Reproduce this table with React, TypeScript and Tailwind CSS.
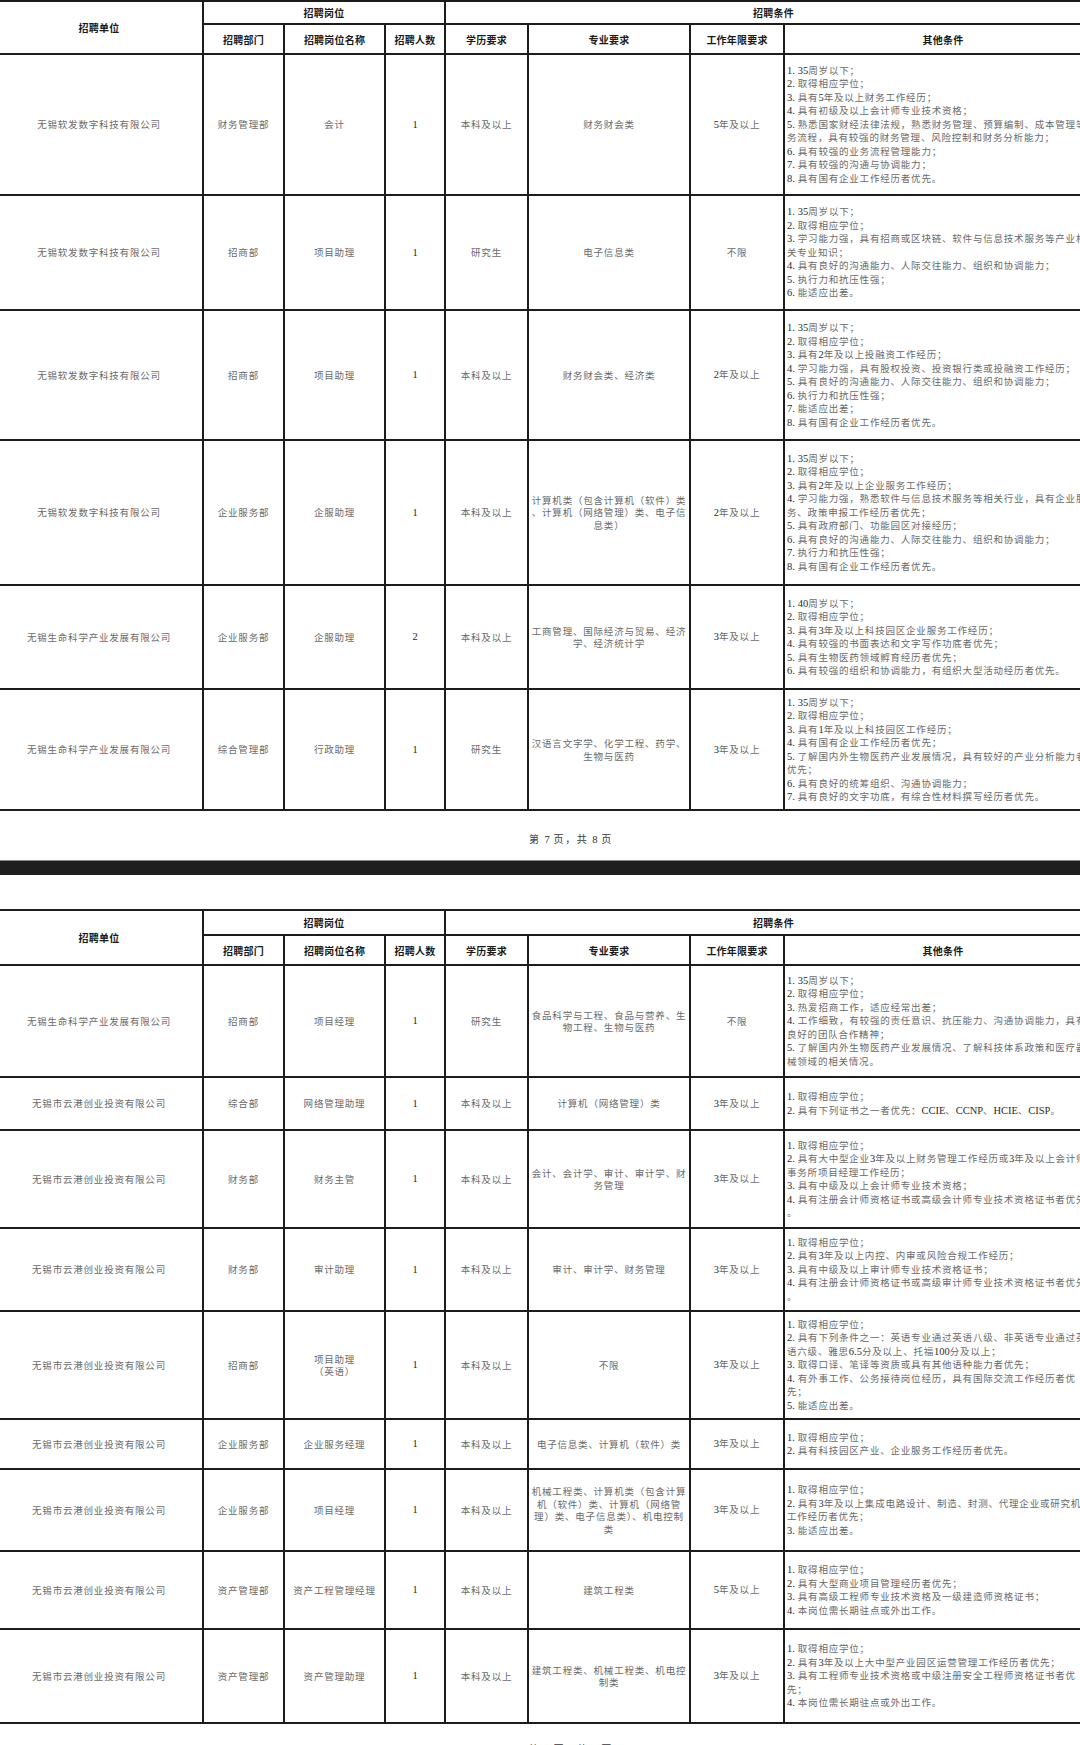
import React from "react";

type Row = {
  h: string;
  unit: string;
  dept: string;
  pos: string[];
  n: string;
  edu: string;
  major: string[];
  years: string;
  other: string[];
};

// column widths of the scanned table (first column starts just off screen)
const grid = "grid grid-cols-[208px_81px_101px_60px_83px_162px_94px_318px]";
const line = "border-r-2 border-b-2 border-[#1c1c1c]";

const SUB = ["招聘部门", "招聘岗位名称", "招聘人数", "学历要求", "专业要求", "工作年限要求", "其他条件"];

const YG = "无锡市云港创业投资有限公司";
const RF = "无锡软发数字科技有限公司";
const SM = "无锡生命科学产业发展有限公司";

const page7: Row[] = [
  {
    h: "h-[141px]",
    unit: RF,
    dept: "财务管理部",
    pos: ["会计"],
    n: "1",
    edu: "本科及以上",
    major: ["财务财会类"],
    years: "5年及以上",
    other: [
      "1. 35周岁以下；",
      "2. 取得相应学位；",
      "3. 具有5年及以上财务工作经历；",
      "4. 具有初级及以上会计师专业技术资格；",
      "5. 熟悉国家财经法律法规，熟悉财务管理、预算编制、成本管理等业",
      "务流程，具有较强的财务管理、风险控制和财务分析能力；",
      "6. 具有较强的业务流程管理能力；",
      "7. 具有较强的沟通与协调能力；",
      "8. 具有国有企业工作经历者优先。",
    ],
  },
  {
    h: "h-[115px]",
    unit: RF,
    dept: "招商部",
    pos: ["项目助理"],
    n: "1",
    edu: "研究生",
    major: ["电子信息类"],
    years: "不限",
    other: [
      "1. 35周岁以下；",
      "2. 取得相应学位；",
      "3. 学习能力强，具有招商或区块链、软件与信息技术服务等产业相",
      "关专业知识；",
      "4. 具有良好的沟通能力、人际交往能力、组织和协调能力；",
      "5. 执行力和抗压性强；",
      "6. 能适应出差。",
    ],
  },
  {
    h: "h-[130px]",
    unit: RF,
    dept: "招商部",
    pos: ["项目助理"],
    n: "1",
    edu: "本科及以上",
    major: ["财务财会类、经济类"],
    years: "2年及以上",
    other: [
      "1. 35周岁以下；",
      "2. 取得相应学位；",
      "3. 具有2年及以上投融资工作经历；",
      "4. 学习能力强，具有股权投资、投资银行类或投融资工作经历；",
      "5. 具有良好的沟通能力、人际交往能力、组织和协调能力；",
      "6. 执行力和抗压性强；",
      "7. 能适应出差；",
      "8. 具有国有企业工作经历者优先。",
    ],
  },
  {
    h: "h-[145px]",
    unit: RF,
    dept: "企业服务部",
    pos: ["企服助理"],
    n: "1",
    edu: "本科及以上",
    major: ["计算机类（包含计算机（软件）类", "、计算机（网络管理）类、电子信", "息类）"],
    years: "2年及以上",
    other: [
      "1. 35周岁以下；",
      "2. 取得相应学位；",
      "3. 具有2年及以上企业服务工作经历；",
      "4. 学习能力强，熟悉软件与信息技术服务等相关行业，具有企业服",
      "务、政策申报工作经历者优先；",
      "5. 具有政府部门、功能园区对接经历；",
      "6. 具有良好的沟通能力、人际交往能力、组织和协调能力；",
      "7. 执行力和抗压性强；",
      "8. 具有国有企业工作经历者优先。",
    ],
  },
  {
    h: "h-[104px]",
    unit: SM,
    dept: "企业服务部",
    pos: ["企服助理"],
    n: "2",
    edu: "本科及以上",
    major: ["工商管理、国际经济与贸易、经济", "学、经济统计学"],
    years: "3年及以上",
    other: [
      "1. 40周岁以下；",
      "2. 取得相应学位；",
      "3. 具有3年及以上科技园区企业服务工作经历；",
      "4. 具有较强的书面表达和文字写作功底者优先；",
      "5. 具有生物医药领域孵育经历者优先；",
      "6. 具有较强的组织和协调能力，有组织大型活动经历者优先。",
    ],
  },
  {
    h: "h-[121px]",
    unit: SM,
    dept: "综合管理部",
    pos: ["行政助理"],
    n: "1",
    edu: "研究生",
    major: ["汉语言文字学、化学工程、药学、", "生物与医药"],
    years: "3年及以上",
    other: [
      "1. 35周岁以下；",
      "2. 取得相应学位；",
      "3. 具有1年及以上科技园区工作经历；",
      "4. 具有国有企业工作经历者优先；",
      "5. 了解国内外生物医药产业发展情况，具有较好的产业分析能力者",
      "优先；",
      "6. 具有良好的统筹组织、沟通协调能力；",
      "7. 具有良好的文字功底，有综合性材料撰写经历者优先。",
    ],
  },
];

const page8: Row[] = [
  {
    h: "h-[112px]",
    unit: SM,
    dept: "招商部",
    pos: ["项目经理"],
    n: "1",
    edu: "研究生",
    major: ["食品科学与工程、食品与营养、生", "物工程、生物与医药"],
    years: "不限",
    other: [
      "1. 35周岁以下；",
      "2. 取得相应学位；",
      "3. 热爱招商工作，适应经常出差；",
      "4. 工作细致，有较强的责任意识、抗压能力、沟通协调能力，具有",
      "良好的团队合作精神；",
      "5. 了解国内外生物医药产业发展情况、了解科技体系政策和医疗器",
      "械领域的相关情况。",
    ],
  },
  {
    h: "h-[53px]",
    unit: YG,
    dept: "综合部",
    pos: ["网络管理助理"],
    n: "1",
    edu: "本科及以上",
    major: ["计算机（网络管理）类"],
    years: "3年及以上",
    other: ["1. 取得相应学位；", "2. 具有下列证书之一者优先：CCIE、CCNP、HCIE、CISP。"],
  },
  {
    h: "h-[98px]",
    unit: YG,
    dept: "财务部",
    pos: ["财务主管"],
    n: "1",
    edu: "本科及以上",
    major: ["会计、会计学、审计、审计学、财", "务管理"],
    years: "3年及以上",
    other: [
      "1. 取得相应学位；",
      "2. 具有大中型企业3年及以上财务管理工作经历或3年及以上会计师",
      "事务所项目经理工作经历；",
      "3. 具有中级及以上会计师专业技术资格；",
      "4. 具有注册会计师资格证书或高级会计师专业技术资格证书者优先",
      "。",
    ],
  },
  {
    h: "h-[83px]",
    unit: YG,
    dept: "财务部",
    pos: ["审计助理"],
    n: "1",
    edu: "本科及以上",
    major: ["审计、审计学、财务管理"],
    years: "3年及以上",
    other: [
      "1. 取得相应学位；",
      "2. 具有3年及以上内控、内审或风险合规工作经历；",
      "3. 具有中级及以上审计师专业技术资格证书；",
      "4. 具有注册会计师资格证书或高级审计师专业技术资格证书者优先",
      "。",
    ],
  },
  {
    h: "h-[108px]",
    unit: YG,
    dept: "招商部",
    pos: ["项目助理", "（英语）"],
    n: "1",
    edu: "本科及以上",
    major: ["不限"],
    years: "3年及以上",
    other: [
      "1. 取得相应学位；",
      "2. 具有下列条件之一：英语专业通过英语八级、非英语专业通过英",
      "语六级、雅思6.5分及以上、托福100分及以上；",
      "3. 取得口译、笔译等资质或具有其他语种能力者优先；",
      "4. 有外事工作、公务接待岗位经历，具有国际交流工作经历者优",
      "先；",
      "5. 能适应出差。",
    ],
  },
  {
    h: "h-[50px]",
    unit: YG,
    dept: "企业服务部",
    pos: ["企业服务经理"],
    n: "1",
    edu: "本科及以上",
    major: ["电子信息类、计算机（软件）类"],
    years: "3年及以上",
    other: ["1. 取得相应学位；", "2. 具有科技园区产业、企业服务工作经历者优先。"],
  },
  {
    h: "h-[82px]",
    unit: YG,
    dept: "企业服务部",
    pos: ["项目经理"],
    n: "1",
    edu: "本科及以上",
    major: ["机械工程类、计算机类（包含计算", "机（软件）类、计算机（网络管", "理）类、电子信息类）、机电控制", "类"],
    years: "3年及以上",
    other: [
      "1. 取得相应学位；",
      "2. 具有3年及以上集成电路设计、制造、封测、代理企业或研究机构",
      "工作经历者优先；",
      "3. 能适应出差。",
    ],
  },
  {
    h: "h-[78px]",
    unit: YG,
    dept: "资产管理部",
    pos: ["资产工程管理经理"],
    n: "1",
    edu: "本科及以上",
    major: ["建筑工程类"],
    years: "5年及以上",
    other: [
      "1. 取得相应学位；",
      "2. 具有大型商业项目管理经历者优先；",
      "3. 具有高级工程师专业技术资格及一级建造师资格证书；",
      "4. 本岗位需长期驻点或外出工作。",
    ],
  },
  {
    h: "h-[94px]",
    unit: YG,
    dept: "资产管理部",
    pos: ["资产管理助理"],
    n: "1",
    edu: "本科及以上",
    major: ["建筑工程类、机械工程类、机电控", "制类"],
    years: "3年及以上",
    other: [
      "1. 取得相应学位；",
      "2. 具有3年及以上大中型产业园区运营管理工作经历者优先；",
      "3. 具有工程师专业技术资格或中级注册安全工程师资格证书者优",
      "先；",
      "4. 本岗位需长期驻点或外出工作。",
    ],
  },
];

// latin runs (numbers, cert names) are set in a darker serif, like the scan
function Rich({ text }: { text: string }) {
  const parts = text.split(/([0-9A-Za-z.]+)/);
  return (
    <>
      {parts.map((p, i) =>
        /[0-9A-Za-z]/.test(p) ? (
          <span key={i} className="font-['Liberation_Serif',serif] text-[10.5px] tracking-normal text-[#2b2b2b]">
            {p}
          </span>
        ) : (
          <React.Fragment key={i}>{p}</React.Fragment>
        )
      )}
    </>
  );
}

function HeadCell({ children, className = "" }: { children: React.ReactNode; className?: string }) {
  return (
    <div
      className={`${line} ${className} flex items-center justify-center font-bold text-[10px] tracking-[0.2px] text-[#1a1a1a]`}
    >
      {children}
    </div>
  );
}

function Center({ lines }: { lines: string[] }) {
  return (
    <div className={`${line} flex flex-col items-center justify-center px-[2px] text-center leading-[12.5px] overflow-hidden whitespace-nowrap`}>
      {lines.map((l, i) => (
        <div key={i}>
          <Rich text={l} />
        </div>
      ))}
    </div>
  );
}

function Table({ rows, head }: { rows: Row[]; head: string }) {
  return (
    <div className="-ml-[4px] w-[1107px] border-t-2 border-[#1c1c1c]">
      <div className={`${grid} ${head}`}>
        <HeadCell className="row-span-2">招聘单位</HeadCell>
        <HeadCell className="col-span-3">招聘岗位</HeadCell>
        <HeadCell className="col-span-4">招聘条件</HeadCell>
        {SUB.map((s) => (
          <HeadCell key={s}>{s}</HeadCell>
        ))}
      </div>
      {rows.map((r, i) => (
        <div key={i} className={`${grid} ${r.h}`}>
          <Center lines={[r.unit]} />
          <Center lines={[r.dept]} />
          <Center lines={r.pos} />
          <Center lines={[r.n]} />
          <Center lines={[r.edu]} />
          <Center lines={r.major} />
          <Center lines={[r.years]} />
          <div className={`${line} flex flex-col justify-center pl-[2px] leading-[13.5px] overflow-hidden whitespace-nowrap`}>
            {r.other.map((l, j) => (
              <div key={j}>
                <Rich text={l} />
              </div>
            ))}
          </div>
        </div>
      ))}
    </div>
  );
}

export default function App() {
  return (
    <div className="w-[1080px] h-[1745px] overflow-hidden bg-white font-['Noto_Sans_CJK_SC','Noto_Sans',sans-serif] text-[9.5px] tracking-[0.8px] text-[#6a6a6a]">
      <Table rows={page7} head="grid-rows-[23px_30px]" />

      {/* page footer + gap between scanned pages */}
      <div className="h-[49px] pt-[22px] pl-[62px] text-center leading-[12px] text-[10px] tracking-[1.6px] text-[#3a3a3a]">
        第 <Rich text="7" /> 页，共 <Rich text="8" /> 页
      </div>
      <div className="h-[15px] bg-[#1e1e1e] border-t border-[#8a8a8a]" />
      <div className="h-[34px]" />

      <Table rows={page8} head="grid-rows-[25px_30px]" />

      <div className="pt-[19px] pl-[62px] text-center leading-[12px] text-[10px] tracking-[1.6px] text-[#3a3a3a]">
        第 <Rich text="8" /> 页，共 <Rich text="8" /> 页
      </div>
    </div>
  );
}
